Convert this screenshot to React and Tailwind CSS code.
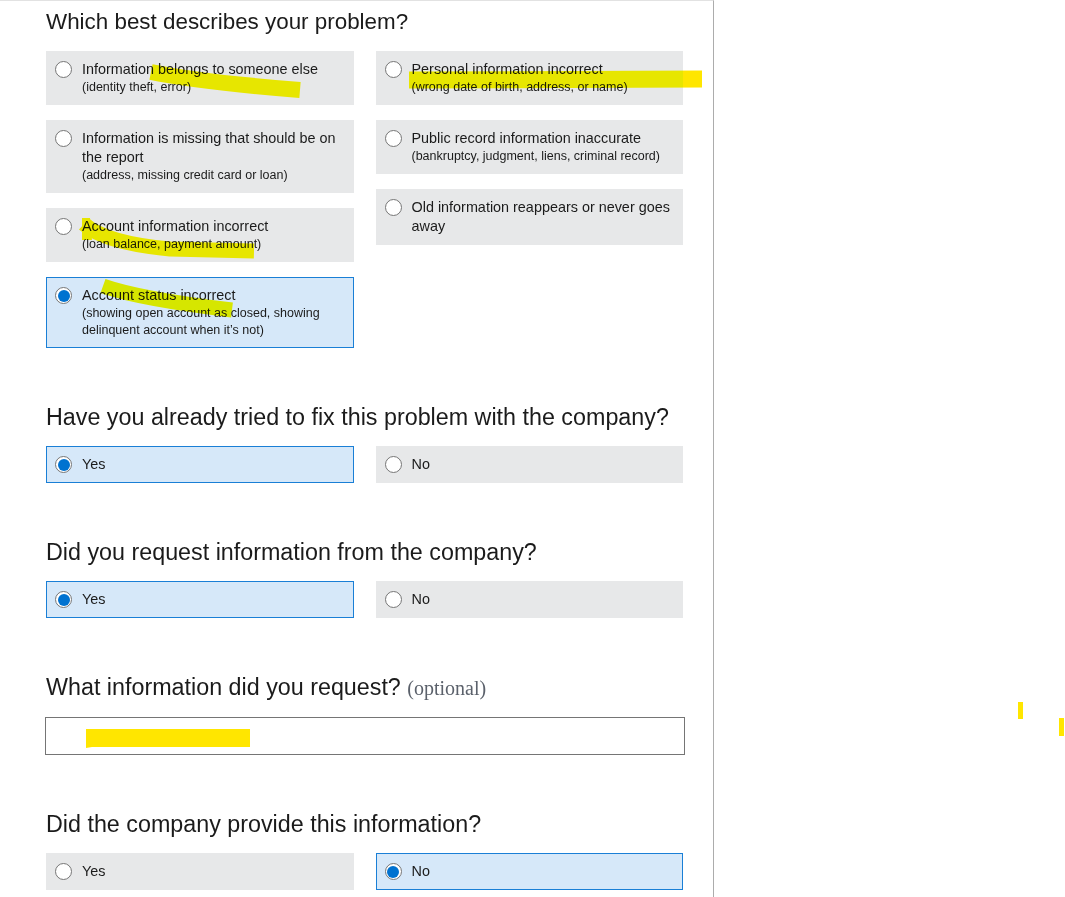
const leftProblems = [
  {
    label: "Information belongs to someone else",
    sub: "(identity theft, error)",
  },
  {
    label: "Information is missing that should be on the report",
    sub: "(address, missing credit card or loan)",
  },
  {
    label: "Account information incorrect",
    sub: "(loan balance, payment amount)",
  },
  {
    label: "Account status incorrect",
    sub: "(showing open account as closed, showing delinquent account when it\u2019s not)",
    selected: true,
  },
];

const rightProblems = [
  {
    label: "Personal information incorrect",
    sub: "(wrong date of birth, address, or name)",
  },
  {
    label: "Public record information inaccurate",
    sub: "(bankruptcy, judgment, liens, criminal record)",
  },
  {
    label: "Old information reappears or never goes away",
  },
];

const Radio = ({ checked }) => (
  <span className="mt-[1px] flex h-[17px] w-[17px] shrink-0 items-center justify-center rounded-full border border-[#767676] bg-white">
    {checked ? (
      <span className="h-[12px] w-[12px] rounded-full bg-[#0072d0]" />
    ) : null}
  </span>
);

const Option = ({ label, sub, selected }) => (
  <div
    className={`flex items-start gap-[10px] border py-[8px] pl-[8px] pr-[7px] ${
      selected
        ? "border-[#1a7fd6] bg-[#d6e8f9]"
        : "border-transparent bg-[#e7e8e9]"
    }`}
  >
    <Radio checked={selected} />
    <div className="text-[#1b1b1b]">
      <p className="text-[14.4px] leading-[19px]">{label}</p>
      {sub ? <p className="text-[12.5px] leading-[17px]">{sub}</p> : null}
    </div>
  </div>
);

const Heading = ({ children, small }) => (
  <h2
    className={`mb-[15px] leading-[28px] text-[#1b1b1b] ${
      small ? "text-[22.4px]" : "text-[23.3px]"
    }`}
  >
    {children}
  </h2>
);

const YesNo = ({ value }) => (
  <div className="grid w-[637px] grid-cols-2 gap-x-[22px]">
    <Option label="Yes" selected={value === "yes"} />
    <Option label="No" selected={value === "no"} />
  </div>
);

const Highlights = () => (
  <svg
    className="pointer-events-none absolute left-0 top-0 mix-blend-darken"
    width="1065"
    height="897"
    viewBox="0 0 1065 897"
  >
    <g fill="none" stroke="#ffe600" strokeLinecap="butt" strokeLinejoin="round">
      <path d="M151 72 Q 200 82 300 90" strokeWidth="16" />
      <path d="M409 80 L 702 79" strokeWidth="17" />
      <path d="M84 224 Q 105 243 170 249 L 254 251" strokeWidth="15" />
      <path d="M103 286 Q 140 299 232 310" strokeWidth="15" />
    </g>
    <g fill="#ffe600">
      <path d="M82 218 L 90 218 L 92 240 L 82 240 Z" />
      <path d="M86 729 L 250 729 L 250 747 L 92 747 L 86 748 Z" />
      <rect x="1018" y="702" width="5" height="17" />
      <rect x="1059" y="718" width="5" height="18" />
    </g>
  </svg>
);

export default function App() {
  return (
    <div className="relative min-h-[897px] bg-white font-['Liberation_Sans',Arial,sans-serif]">
      <div className="min-h-[897px] w-[714px] border-r border-t border-r-[#acacac] border-t-[#e2e2e2] pl-[46px] pt-[7px]">
        <section>
          <Heading small>Which best describes your problem?</Heading>
          <div className="grid w-[637px] grid-cols-2 items-start gap-x-[22px]">
            <div className="flex flex-col gap-[15px]">
              {leftProblems.map((item) => (
                <Option key={item.label} {...item} />
              ))}
            </div>
            <div className="flex flex-col gap-[15px]">
              {rightProblems.map((item) => (
                <Option key={item.label} {...item} />
              ))}
            </div>
          </div>
        </section>

        <section className="mt-[55px]">
          <Heading>Have you already tried to fix this problem with the company?</Heading>
          <YesNo value="yes" />
        </section>

        <section className="mt-[55px]">
          <Heading>Did you request information from the company?</Heading>
          <YesNo value="yes" />
        </section>

        <section className="mt-[55px]">
          <Heading>
            What information did you request?{" "}
            <span className="font-['Liberation_Serif',serif] text-[20px] text-[#5b616b]">
              (optional)
            </span>
          </Heading>
          <input
            type="text"
            className="-ml-px block h-[38px] w-[640px] border border-[#757575] bg-white px-3 outline-none"
          />
        </section>

        <section className="mt-[55px]">
          <Heading>Did the company provide this information?</Heading>
          <YesNo value="no" />
        </section>
      </div>
      <Highlights />
    </div>
  );
}
